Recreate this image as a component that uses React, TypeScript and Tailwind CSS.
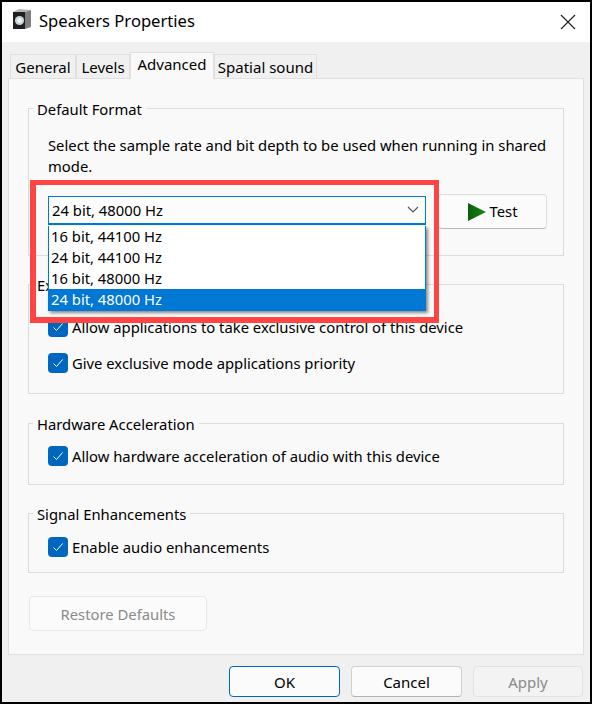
import type { ReactNode } from 'react';

function SpeakerIcon() {
  return (
    <svg width="18" height="20" viewBox="0 0 18 20" className="shrink-0 -mt-[6px]">
      <path d="M0 3 L6 0 L18 1 L12 3 Z" fill="#b4b4b4" />
      <path d="M12 3 L18 1 V18 L12 20 Z" fill="#7f7f7f" />
      <path d="M0 3 H12 V20 H0 Z" fill="#1f1f1f" />
      <circle cx="6.5" cy="11.5" r="4.6" fill="#c9d2d6" />
      <circle cx="6.5" cy="11.5" r="2.4" fill="#f2f4f5" />
    </svg>
  );
}

function Tab({ label, width, active }: { label: string; width: string; active?: boolean }) {
  if (active) {
    return (
      <div className={`${width} h-[27px] -mb-px z-10 bg-[#f9f9f9] border border-b-0 border-[#e0e0e0] flex justify-center whitespace-nowrap text-[15px] leading-[22px] text-black`}>
        {label}
      </div>
    );
  }
  return (
    <div className={`${width} h-[24px] bg-[#f0f0f0] border border-b-0 border-[#e0e0e0] flex justify-center whitespace-nowrap pt-[1px] text-[15px] leading-[22px] text-black`}>
      {label}
    </div>
  );
}

function Group({ title, className, children }: { title: string; className: string; children: ReactNode }) {
  return (
    <div className={`relative border border-[#dcdcdc] ${className}`}>
      <div className="absolute left-[4px] -top-[10px] bg-[#f9f9f9] px-[4px] text-[14.8px] leading-[20px] text-black">{title}</div>
      {children}
    </div>
  );
}

function Check({ label }: { label: string }) {
  return (
    <div className="flex items-center h-[20px] gap-[4px]">
      <div className="w-[20px] h-[20px] rounded-[4px] bg-[#0067c0] flex items-center justify-center">
        <svg width="12" height="12" viewBox="0 0 12 12" fill="none" stroke="white" strokeWidth="1">
          <path d="M1.5 6.5 L4.5 9.5 L10.5 2.5" />
        </svg>
      </div>
      <span className="text-[14.8px] leading-[20px] text-black">{label}</span>
    </div>
  );
}

function FooterButton({ label, kind }: { label: string; kind: 'ok' | 'cancel' | 'apply' }) {
  const styles = {
    ok: 'w-[111px] bg-[#fbfbfb] border-[#0067c0] text-black',
    cancel: 'w-[111px] bg-[#fbfbfb] border-[#d0d0d0] border-b-[#b0b0b0] text-black',
    apply: 'w-[110px] bg-[#f3f3f3] border-[#e2e2e2] text-[#8a8a8a]',
  };
  return (
    <div className={`h-[31px] pt-px rounded-[4px] border flex items-center justify-center text-[15px] ${styles[kind]}`}>
      {label}
    </div>
  );
}

export default function App() {
  const options = ['16 bit, 44100 Hz', '24 bit, 44100 Hz', '16 bit, 48000 Hz', '24 bit, 48000 Hz'];

  return (
    <div className="w-[592px] h-[704px] border-2 border-black bg-[#f0f0f0] flex flex-col overflow-hidden font-['Noto_Sans','Open_Sans',sans-serif]">
      <div className="h-[40px] bg-white flex items-center shrink-0 pl-[11px]">
        <SpeakerIcon />
        <span className="ml-[8px] -mt-[2px] text-[16.6px] text-black">Speakers Properties</span>
        <svg width="18" height="18" viewBox="0 0 18 18" fill="none" stroke="#222" strokeWidth="1.2" className="ml-auto mr-[13px]">
          <path d="M2 2 L16 16 M16 2 L2 16" />
        </svg>
      </div>

      <div className="flex items-end h-[36px] pl-[8px] shrink-0">
        <Tab label="General" width="w-[66px]" />
        <Tab label="Levels" width="w-[54px]" />
        <Tab label="Advanced" width="w-[84px]" active />
        <Tab label="Spatial sound" width="w-[103px]" />
      </div>

      <div className="mx-[6px] h-[577px] bg-[#f9f9f9] border border-[#e0e0e0] px-[19px] pt-[29px] flex flex-col relative">
        <Group title="Default Format" className="h-[148px] pl-[19px] pr-[16px] pt-[26px]">
          <p className="text-[14.8px] leading-[21px] text-black">
            Select the sample rate and bit depth to be used when running in shared mode.
          </p>
          <div className="flex items-start mt-[17px] gap-[12px]">
            <div className="relative w-[378px] h-[29px] mt-[2px] pt-px bg-[#fcfcfc] border border-[#0078d4] border-b-2 flex items-center pl-[3px] text-[14.8px] text-black">
              24 bit, 48000 Hz
              <svg width="12" height="8" viewBox="0 0 12 8" fill="none" stroke="#555" strokeWidth="1.1" className="absolute right-[6px] top-[9px]">
                <path d="M1 1 L6 6 L11 1" />
              </svg>
              <div className="absolute z-20 -left-px top-[29px] w-[378px] h-[85px] bg-white border-x border-[#0078d4] shadow-[2px_2px_3px_rgba(0,0,0,0.45)] flex flex-col">
                {options.map((option, i) => (
                  <div
                    key={option}
                    className={i === 3
                      ? 'h-[22px] -mx-px px-[3px] bg-[#0078d4] text-white text-[14.8px] leading-[21px]'
                      : 'h-[21px] px-[2px] text-black text-[14.8px] leading-[21px]'}
                  >
                    {option}
                  </div>
                ))}
              </div>
            </div>
            <div className="w-[109px] h-[35px] rounded-[4px] bg-[#fbfbfb] border border-[#dcdcdc] border-b-[#b8b8b8] flex items-center justify-center gap-[4px] text-[14.8px] text-black">
              <svg width="18" height="18" viewBox="0 0 18 18">
                <defs>
                  <linearGradient id="testPlay" x1="0" y1="0" x2="1" y2="0">
                    <stop offset="0" stopColor="#0b5e0b" />
                    <stop offset="1" stopColor="#158a15" />
                  </linearGradient>
                </defs>
                <path d="M0 0 L18 9 L0 18 Z" fill="url(#testPlay)" />
              </svg>
              Test
            </div>
          </div>
        </Group>

        <Group title="Exclusive Mode" className="h-[110px] mt-[28px] pl-[19px] pt-[32px]">
          <div className="flex flex-col gap-[16px]">
            <Check label="Allow applications to take exclusive control of this device" />
            <Check label="Give exclusive mode applications priority" />
          </div>
        </Group>

        <Group title="Hardware Acceleration" className="h-[62px] mt-[29px] pl-[19px] pt-[22px]">
          <Check label="Allow hardware acceleration of audio with this device" />
        </Group>

        <Group title="Signal Enhancements" className="h-[60px] mt-[28px] pl-[19px] pt-[23px]">
          <Check label="Enable audio enhancements" />
        </Group>

        <div className="w-[178px] h-[35px] pt-px mt-[23px] ml-px rounded-[4px] bg-[#fbfbfb] border border-[#e8e8e8] flex items-center justify-center text-[14.8px] text-[#8a8a8a]">
          Restore Defaults
        </div>

        {/* annotation drawn over the dialog */}
        <div className="absolute z-30 left-[21px] top-[101px] w-[409px] h-[143px] border-t-[5px] border-r-[5px] border-b-[6px] border-l-[6px] border-[#ff4444] pointer-events-none" />
      </div>

      <div className="flex justify-end gap-[11px] mt-[11px] pr-[7px]">
        <FooterButton label="OK" kind="ok" />
        <FooterButton label="Cancel" kind="cancel" />
        <FooterButton label="Apply" kind="apply" />
      </div>
    </div>
  );
}
